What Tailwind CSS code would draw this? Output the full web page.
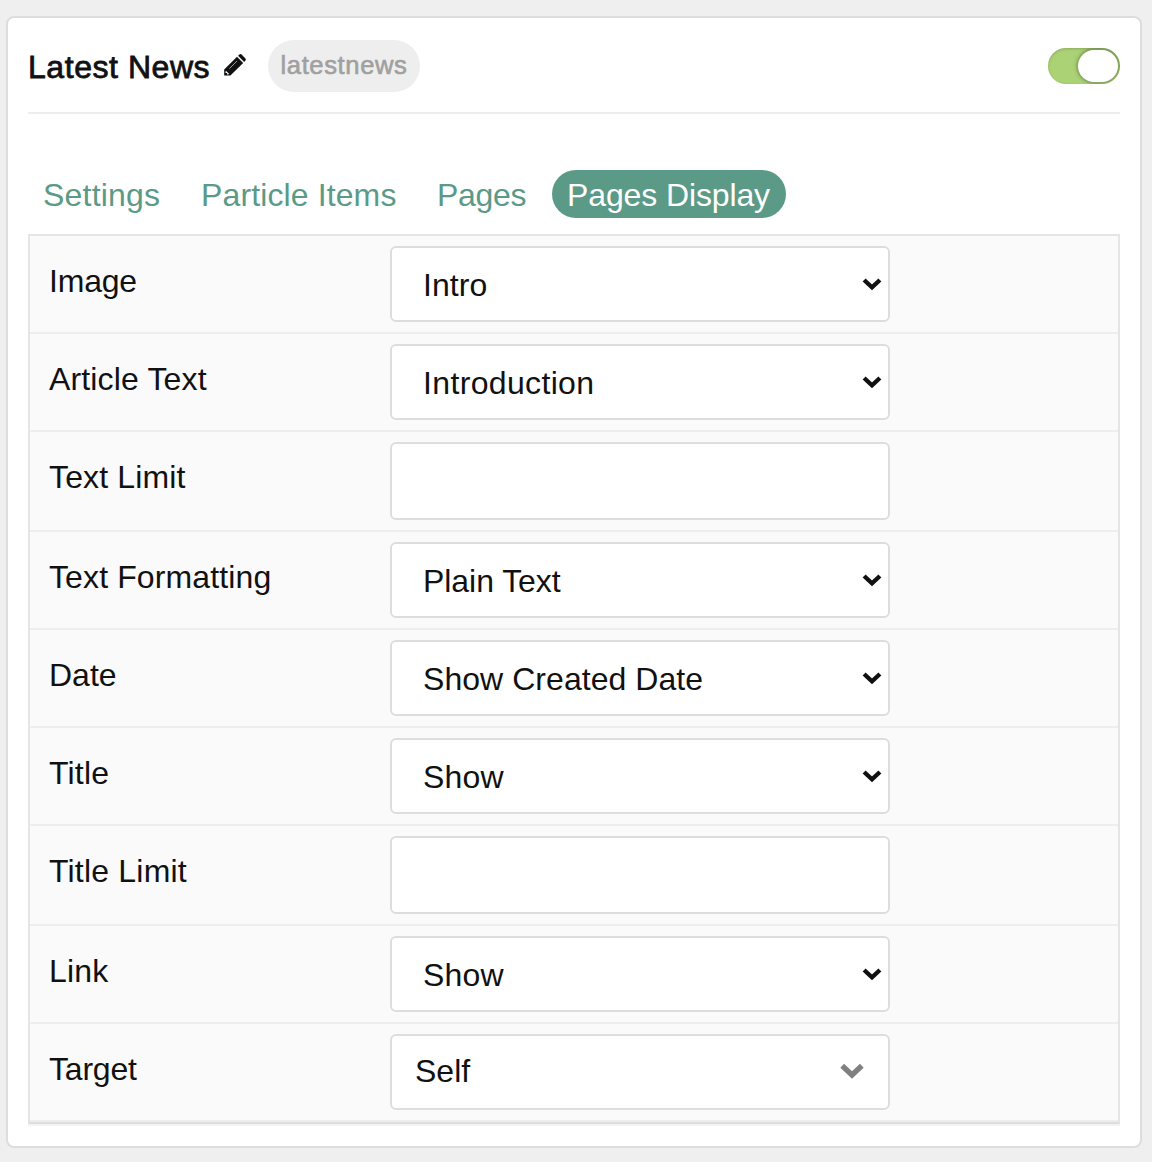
<!DOCTYPE html>
<html lang="en">
<head>
<meta charset="utf-8">
<title>Latest News</title>
<script src="https://cdn.jsdelivr.net/npm/@tailwindcss/browser@4"></script>
</head>
<body class="bg-[#efefef] font-['Liberation_Sans',Arial,sans-serif] text-[32px] leading-[48px] tracking-[0.2px] text-[#111] min-h-screen pt-4 pl-1.5 overflow-hidden">
<svg class="hidden">
  <symbol id="chevron" viewBox="0 0 20 13"><path d="M2.1 2 10 9.4 17.9 2" fill="none" stroke="currentColor" stroke-width="4.3"/></symbol>
</svg>
<main class="w-[1136px] h-[1132px] bg-white border-2 border-[#ddd] rounded-lg px-5 pt-[22px]">
  <header class="flex items-center h-[74px] pb-5 border-b-2 border-[#eee]">
    <h1 class="w-[196px] whitespace-nowrap tracking-[0.55px] [-webkit-text-stroke:0.8px_#111] pt-0.5">Latest News</h1>
    <svg class="w-[22px] h-[22px] -mt-0.5" viewBox="0 0 22 22" fill="#111">
      <path d="M13 2.8 19.2 9 6.4 21.6H.2V15.4z"/>
      <path d="M14.1 1.8 15.4.6q1.1-1 2.2 0L21.4 4.4q1 1.1 0 2.2L20.2 7.9z"/>
      <path d="M2.1 17 5 19.8 4.3 20.4H3.1V19H1.5V17.6z" fill="#fff"/>
      <path d="M5.4 14.6 13 7" stroke="#fff" stroke-width=".6"/>
    </svg>
    <span class="ml-[22px] w-[152px] h-[52px] rounded-full bg-[#eee] text-[#a0a0a0] text-[25.6px] leading-[50px] text-center tracking-[0.6px] [-webkit-text-stroke:0.6px_#a0a0a0]">latestnews</span>
    <span class="ml-auto w-[72px] h-9 rounded-full bg-[#abd375] p-0.5 flex justify-end shadow-[inset_0_1px_3px_rgba(0,0,0,0.2)]">
      <span class="w-10 h-8 rounded-full bg-white shadow-[0_0_0_2px_rgba(0,0,0,0.08),0_0_5px_1px_rgba(0,0,0,0.22)] [clip-path:inset(-2px_-2px_-2px_-8px_round_18px)]"></span>
    </span>
  </header>
  <nav class="flex mt-14 h-12 text-[#5b9a87]">
    <a class="w-[158px] pl-[15px] whitespace-nowrap pt-px">Settings</a>
    <a class="w-[236px] pl-[15px] whitespace-nowrap tracking-[0.12px] pt-px">Particle Items</a>
    <a class="w-[130px] pl-[15px] whitespace-nowrap tracking-[-0.3px] pt-px">Pages</a>
    <a class="w-[234px] h-12 rounded-full bg-[#5b9a87] text-white pl-[15px] tracking-[-0.12px] whitespace-nowrap pt-px">Pages Display</a>
  </nav>
  <section class="mt-4 border-2 border-[#e5e5e5] border-b-[#ddd] bg-[#fafafa] shadow-[0_2px_0_#f3f3f3]">
    <div class="flex border-b-2 border-[#eee] py-2.5 pl-[18px]">
      <label class="w-[342px] h-[76px] pl-px pt-[11px] tracking-[-0.2px]">Image</label>
      <div class="w-[500px] h-[76px] bg-white border-2 border-[#ddd] rounded-md flex items-center pl-[31px] pr-[6px] pt-0.5 tracking-[0.05px]">Intro<svg class="w-5 h-[13px] ml-auto mb-0.5"><use href="#chevron"/></svg></div>
    </div>
    <div class="flex border-b-2 border-[#eee] py-2.5 pl-[18px]">
      <label class="w-[342px] h-[76px] pl-px pt-[11px] tracking-[0.15px]">Article Text</label>
      <div class="w-[500px] h-[76px] bg-white border-2 border-[#ddd] rounded-md flex items-center pl-[31px] pr-[6px] pt-0.5 tracking-[0.35px]">Introduction<svg class="w-5 h-[13px] ml-auto mb-0.5"><use href="#chevron"/></svg></div>
    </div>
    <div class="flex border-b-2 border-[#eee] py-2.5 pl-[18px]">
      <label class="w-[342px] h-[78px] pl-px pt-[11px] tracking-[0.15px]">Text Limit</label>
      <div class="w-[500px] h-[78px] bg-white border-2 border-[#ddd] rounded-md"></div>
    </div>
    <div class="flex border-b-2 border-[#eee] py-2.5 pl-[18px]">
      <label class="w-[342px] h-[76px] pl-px pt-[11px] tracking-[0.12px]">Text Formatting</label>
      <div class="w-[500px] h-[76px] bg-white border-2 border-[#ddd] rounded-md flex items-center pl-[31px] pr-[6px] pt-0.5 tracking-[-0.05px]">Plain Text<svg class="w-5 h-[13px] ml-auto mb-0.5"><use href="#chevron"/></svg></div>
    </div>
    <div class="flex border-b-2 border-[#eee] py-2.5 pl-[18px]">
      <label class="w-[342px] h-[76px] pl-px pt-[11px] tracking-[0px]">Date</label>
      <div class="w-[500px] h-[76px] bg-white border-2 border-[#ddd] rounded-md flex items-center pl-[31px] pr-[6px] pt-0.5 tracking-[0.05px]">Show Created Date<svg class="w-5 h-[13px] ml-auto mb-0.5"><use href="#chevron"/></svg></div>
    </div>
    <div class="flex border-b-2 border-[#eee] py-2.5 pl-[18px]">
      <label class="w-[342px] h-[76px] pl-px pt-[11px]">Title</label>
      <div class="w-[500px] h-[76px] bg-white border-2 border-[#ddd] rounded-md flex items-center pl-[31px] pr-[6px] pt-0.5">Show<svg class="w-5 h-[13px] ml-auto mb-0.5"><use href="#chevron"/></svg></div>
    </div>
    <div class="flex border-b-2 border-[#eee] py-2.5 pl-[18px]">
      <label class="w-[342px] h-[78px] pl-px pt-[11px]">Title Limit</label>
      <div class="w-[500px] h-[78px] bg-white border-2 border-[#ddd] rounded-md"></div>
    </div>
    <div class="flex border-b-2 border-[#eee] py-2.5 pl-[18px]">
      <label class="w-[342px] h-[76px] pl-px pt-[11px]">Link</label>
      <div class="w-[500px] h-[76px] bg-white border-2 border-[#ddd] rounded-md flex items-center pl-[31px] pr-[6px] pt-0.5">Show<svg class="w-5 h-[13px] ml-auto mb-0.5"><use href="#chevron"/></svg></div>
    </div>
    <div class="flex border-b-2 border-[#eee] py-2.5 pl-[18px]">
      <label class="w-[342px] h-[76px] pl-px pt-[11px] tracking-[-0.2px]">Target</label>
      <div class="w-[500px] h-[76px] bg-white border-2 border-[#ddd] rounded-md flex items-center pl-[23px] pr-[24px] pb-0.5 tracking-[0px]">Self<svg class="w-6 h-4 ml-auto text-[#808080]" viewBox="0 0 24 16"><path d="M2.2 2.8 12 12 21.8 2.8" fill="none" stroke="currentColor" stroke-width="5.4"/></svg></div>
    </div>
  </section>
</main>
</body>
</html>
